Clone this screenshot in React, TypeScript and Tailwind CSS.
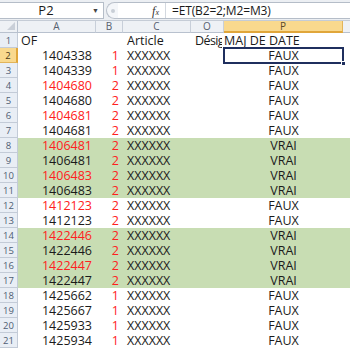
import React from "react";

type R = { n: number; a: string; aRed?: boolean; b: string; c: string; o?: string; p: string; green?: boolean; header?: boolean };

const rows: R[] = [
  { n: 1, a: "OF", b: "", c: "Article", o: "Désignation", p: "MAJ DE DATE", header: true },
  { n: 2, a: "1404338", b: "1", c: "XXXXXX", p: "FAUX" },
  { n: 3, a: "1404339", b: "1", c: "XXXXXX", p: "FAUX" },
  { n: 4, a: "1404680", aRed: true, b: "2", c: "XXXXXX", p: "FAUX" },
  { n: 5, a: "1404680", b: "2", c: "XXXXXX", p: "FAUX" },
  { n: 6, a: "1404681", aRed: true, b: "2", c: "XXXXXX", p: "FAUX" },
  { n: 7, a: "1404681", b: "2", c: "XXXXXX", p: "FAUX" },
  { n: 8, a: "1406481", aRed: true, b: "2", c: "XXXXXX", p: "VRAI", green: true },
  { n: 9, a: "1406481", b: "2", c: "XXXXXX", p: "VRAI", green: true },
  { n: 10, a: "1406483", aRed: true, b: "2", c: "XXXXXX", p: "VRAI", green: true },
  { n: 11, a: "1406483", b: "2", c: "XXXXXX", p: "VRAI", green: true },
  { n: 12, a: "1412123", aRed: true, b: "2", c: "XXXXXX", p: "FAUX" },
  { n: 13, a: "1412123", b: "2", c: "XXXXXX", p: "FAUX" },
  { n: 14, a: "1422446", aRed: true, b: "2", c: "XXXXXX", p: "VRAI", green: true },
  { n: 15, a: "1422446", b: "2", c: "XXXXXX", p: "VRAI", green: true },
  { n: 16, a: "1422447", aRed: true, b: "2", c: "XXXXXX", p: "VRAI", green: true },
  { n: 17, a: "1422447", b: "2", c: "XXXXXX", p: "VRAI", green: true },
  { n: 18, a: "1425662", b: "1", c: "XXXXXX", p: "FAUX" },
  { n: 19, a: "1425667", b: "1", c: "XXXXXX", p: "FAUX" },
  { n: 20, a: "1425933", b: "1", c: "XXXXXX", p: "FAUX" },
  { n: 21, a: "1425934", b: "1", c: "XXXXXX", p: "FAUX" },
];

const font = { fontFamily: '"Open Sans", "Liberation Sans", sans-serif' };

function ColHead({ w, label, sel }: { w: string; label: string; sel?: boolean }) {
  return (
    <div
      className={`${w} h-full shrink-0 flex items-center justify-center text-[10px] border-r ${
        sel
          ? "bg-[#f9d98e] border-[#e2b45a] text-[#5a4a2a] border-b-2 border-b-[#e0a63a]"
          : "bg-[#eef1f5] border-[#c8cfd9] text-[#56606e] border-b border-b-[#b8c1ce]"
      }`}
    >
      {label}
    </div>
  );
}

export default function App() {
  return (
    <div className="w-[350px] h-[350px] overflow-hidden bg-white text-[#1a1a1a]" style={font}>
      {/* formula bar */}
      <div className="h-[21px] flex items-start bg-[#eceff3] border-b border-[#c5ccd6]">
        <div className="mt-[2px] h-[17px] w-[104px] bg-white border-y border-r border-[#b5bdc8] flex items-center">
          <span className="w-[92px] text-center text-[13px] leading-none">P2</span>
          <span className="text-[7px] text-[#444] leading-none">▼</span>
        </div>
        <div className="mt-[2px] ml-[2px] h-[17px] w-[12px] rounded-l-full border border-r-0 border-[#b9c0ca] bg-[#f4f6f9] flex items-center justify-center">
          <div className="w-[4px] h-[4px] rounded-full bg-[#c8ced6]" />
        </div>
        <div className="mt-[2px] h-[17px] flex-1 bg-white border-y border-[#b5bdc8] flex items-center">
          <div className="w-[48px] h-full flex items-center justify-end pr-[6px] border-r border-[#d3d8df]">
            <span className="text-[12px] italic text-[#333] leading-none" style={{ fontFamily: '"Liberation Serif", serif' }}>
              f<span className="text-[8px]">x</span>
            </span>
          </div>
          <span className="pl-[6px] text-[12px] tracking-[-0.15px] leading-none">=ET(B2=2;M2=M3)</span>
        </div>
      </div>
      {/* column headers */}
      <div className="h-[12px] flex">
        <div className="w-[18px] h-full shrink-0 bg-[#eef1f5] border-r border-b border-[#b8c1ce] relative">
          <div className="absolute right-[2px] bottom-[2px] w-0 h-0 border-l-[8px] border-l-transparent border-b-[8px] border-b-[#c9cfd8]" />
        </div>
        <ColHead w="w-[78px]" label="A" />
        <ColHead w="w-[27px]" label="B" />
        <ColHead w="w-[68px]" label="C" />
        <ColHead w="w-[33px]" label="O" />
        <ColHead w="w-[119px]" label="P" sel />
        <div className="flex-1 h-full bg-[#eef1f5] border-b border-[#b8c1ce]" />
      </div>
      {/* rows */}
      {rows.map((r) => (
        <div key={r.n} className={`h-[15px] flex text-[12.5px] leading-[15px] ${r.green ? "bg-[#c8ddb3]" : "bg-white"}`}>
          <div
            className={`w-[18px] shrink-0 text-center text-[9.5px] border-r border-b ${
              r.n === 2
                ? "bg-[#f9d98e] border-[#e2b45a] text-[#4a3a1a] border-r-2 border-r-[#e0a63a]"
                : "bg-[#e9eef5] border-[#c3cbd7] text-[#4f5d73]"
            }`}
          >
            {r.n}
          </div>
          <div className={`w-[78px] shrink-0 pl-[3px] pr-[4px] ${r.header ? "text-left" : "text-right"} ${r.aRed ? "text-[#ff2020]" : ""}`}>
            {r.a}
          </div>
          <div className="w-[27px] shrink-0 pr-[4px] text-right text-[#ff2020]">{r.b}</div>
          <div className="w-[68px] shrink-0 pl-[4px] whitespace-nowrap">{r.c}</div>
          <div className="w-[33px] shrink-0 pl-[4px]">
            <div className="w-[27px] overflow-hidden whitespace-nowrap tracking-[-0.6px]">{r.o ?? ""}</div>
          </div>
          <div className={`w-[119px] shrink-0 ${r.header ? "text-left" : "text-center"} whitespace-nowrap relative`}>
            {r.p}
            {r.n === 2 && (
              <div className="absolute inset-[-1px] border-2 border-[#1f2f5e]">
                <div className="absolute right-[-4px] bottom-[-4px] w-[5px] h-[5px] bg-[#1f2f5e] border border-white" />
              </div>
            )}
          </div>
          <div className="flex-1" />
        </div>
      ))}
    </div>
  );
}
